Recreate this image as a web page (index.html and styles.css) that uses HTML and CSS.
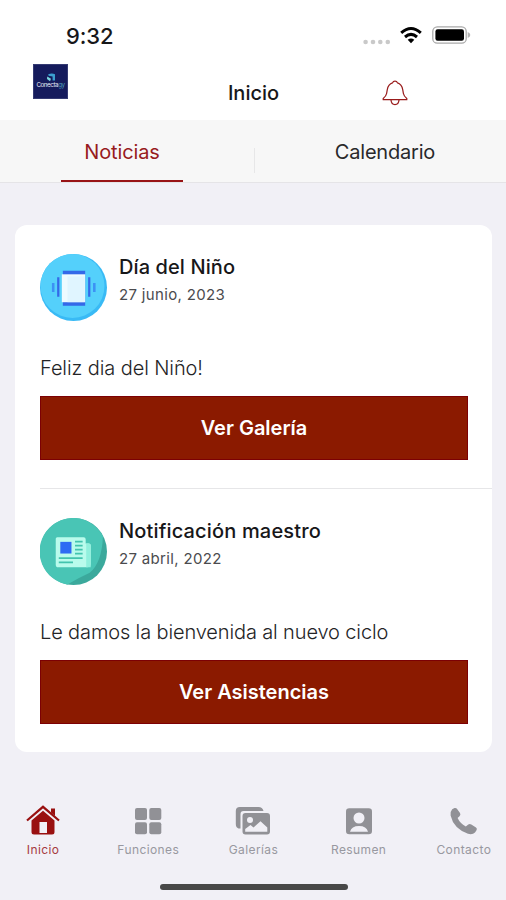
FILE: index.html
```html
<!DOCTYPE html>
<html lang="es">
<head>
<meta charset="utf-8">
<title>Inicio</title>
<link rel="stylesheet" href="styles.css">
</head>
<body>
<header class="top">
  <div class="status">
    <span class="time">9:32</span>
    <div class="signals">
      <svg class="dots" viewBox="0 0 28 6"><circle cx="2.6" cy="3" r="2.3"/><circle cx="10" cy="3" r="2.3"/><circle cx="17.3" cy="3" r="2.3"/><circle cx="24.8" cy="3" r="2.3"/></svg>
      <svg class="wifi" viewBox="0 0 24 18"><path d="M2.2 6.8Q12 -1.9 21.8 6.8M6 11Q12 5.8 18 11" fill="none" stroke="#000" stroke-width="3"/><path d="M8.7 13.8Q12 11.2 15.3 13.8L12 17.3z"/></svg>
      <svg class="battery" viewBox="0 0 39 18"><rect x=".8" y=".8" width="33.4" height="16.4" rx="4.5" fill="#fff" stroke="#a9a9a9" stroke-width="1.3"/><rect x="3.4" y="3.2" width="28.6" height="11.6" rx="2.2"/><path d="M35.7 6v6q2.6-1 2.6-3t-2.6-3z" fill="#b5b5b5"/></svg>
    </div>
  </div>
  <div class="bar">
    <div class="logo">
      <svg class="logo-mark" viewBox="0 0 10 9"><path d="M2.2 1.2Q6-.2 9 1.2V7.6H6.6V3.4L2.6 2.8z" fill="#3b9fd0"/><path d="M1.2 3.6L5 5.8 4 8.2 1 6z" fill="#79d5dc"/></svg>
      <span class="logo-name">Conecta<i>gy</i></span>
    </div>
    <h1>Inicio</h1>
    <svg class="bell" viewBox="0 0 26 26" fill="none" stroke="#991b1b" stroke-width="1.25" stroke-linejoin="round"><path d="M1.2 19.700H24.8V18.400Q22 16.500 21.400 13.500L20.7 9.500Q19.6 4.100 15.5 2.900Q14.8 1 13 1T10.5 2.900Q6.4 4.100 5.3 9.500L4.6 13.500Q4 16.500 1.2 18.400z"/><path d="M9 20Q9.4 24.600 13 24.600T17 20"/></svg>
  </div>
</header>
<nav class="tabs">
  <div class="tab on"><span>Noticias</span></div>
  <div class="tab cal"><span>Calendario</span></div>
</nav>
<main>
  <section class="card">
    <article class="post">
      <div class="head">
        <svg class="avatar" viewBox="0 0 66 66"><circle cx="33" cy="33" r="33" fill="#39baf5"/><circle cx="32" cy="31.500" r="31.500" fill="#54d0fb"/><path d="M22.500 16.500H44.500V51H22.500z" fill="#3469e8"/><rect x="21.500" y="20" width="23" height="27.500" fill="#edfaff"/><path d="M27 22H44V47.500H27z" fill="#d9f3ff" opacity=".65"/><path d="M18 23v19M48.500 23v19" stroke="#3469e8" stroke-width="2.200"/><path d="M13 28.500v9M53.500 28.500v9" stroke="#3c91f5" stroke-width="2.500"/></svg>
        <div><h2 class="t1">Día del Niño</h2><time class="d1">27 junio, 2023</time></div>
      </div>
      <p class="b1">Feliz dia del Niño!</p>
      <a class="btn">Ver Galería</a>
    </article>
    <article class="post">
      <div class="head">
        <svg class="avatar" viewBox="0 0 66 66"><circle cx="33" cy="33" r="33" fill="#3ba99c"/><path d="M62 18A33 33 0 1 0 27 65.500Q38 59 49 54Q61 44 62 18z" fill="#49c5b5"/><path d="M17 19H43Q45 19 45 21V25H48Q50 25 50 27V45Q50 48.500 46.500 48.500H18Q15.500 48.500 15.500 46V20.500Q15.500 19 17 19z" fill="#b9fbec"/><path d="M45.500 25V48.500H50V27Q50 25 48 25z" fill="#91f0dd"/><rect x="20" y="23.500" width="11" height="11.500" fill="#2d6bf3"/><path d="M34.500 23.200h7.500M34.500 27.200h7.500M34.500 31.200h7.500M34.500 35.200h7.500M18.500 39.500h23.500M18.500 43.700h14" stroke="#42c4ae" stroke-width="1.7"/></svg>
        <div><h2 class="t2">Notificación maestro</h2><time class="d2">27 abril, 2022</time></div>
      </div>
      <p class="b2">Le damos la bienvenida al nuevo ciclo</p>
      <a class="btn">Ver Asistencias</a>
    </article>
  </section>
</main>
<footer>
  <a class="item active"><svg viewBox="0 0 36 32"><path d="M2 16.500L18 2.800L34 16.500" fill="none" stroke="#991010" stroke-width="2.200"/><path d="M26 4.500H30V12L26 8.500z"/><path fill-rule="evenodd" d="M6.500 16.500L18 6.700L29.500 16.500V28Q29.500 30.500 27 30.500H9Q6.500 30.500 6.500 28zM14.500 18V29H22V18z"/></svg><span>Inicio</span></a>
  <a class="item"><svg viewBox="0 0 36 32"><rect x="5" y="4" width="12" height="12" rx="2"/><rect x="19.300" y="4" width="12" height="12" rx="2"/><rect x="5" y="18.300" width="12" height="12" rx="2"/><rect x="19.300" y="18.300" width="12" height="12" rx="2"/></svg><span>Funciones</span></a>
  <a class="item"><svg viewBox="0 0 36 32"><path d="M3.500 24.500Q.8 23.500.8 20V7Q.8 3 4.800 3H23.500Q27.500 3 28.500 7H8.500Q5.500 7 5.500 10V24.500z"/><path fill-rule="evenodd" d="M10.500 9H32Q35 9 35 12V27.500Q35 30.500 32 30.500H10.500Q7.500 30.500 7.500 27.500V12Q7.500 9 10.500 9zM10.200 27.800H32.300V23.500L25.500 17.200L18.500 23.500L15.500 21L10.200 25z"/><circle cx="15" cy="16" r="3" fill="#f1f0f6"/></svg><span>Galerías</span></a>
  <a class="item"><svg viewBox="0 0 36 32"><rect x="5" y="4.200" width="26" height="26" rx="3.300"/><circle cx="18" cy="14" r="5.500" fill="#f1f0f6"/><path d="M9 27.800Q10.500 22 18 22T27 27.800z" fill="#f1f0f6"/></svg><span>Resumen</span></a>
  <a class="item"><svg viewBox="0 0 36 32"><path d="M6.200 5.200L8.500 4Q10.200 3.500 11.300 5.200L14 9Q15 10.700 13.500 12.200L11.600 14Q14 19.300 19.800 22.500L22.300 20.400Q23.700 19.400 25.300 20.400L30 23.400Q31.500 24.700 30.500 26.200L29 28.500Q26.500 31 22 29.800Q7.500 24.500 4.600 11.500Q4 7.500 6.200 5.200z"/></svg><span>Contacto</span></a>
</footer>
<div class="home"></div>
</body>
</html>
```
FILE: styles.css
```css
* { box-sizing: border-box; margin: 0; padding: 0; }
body { width: 506px; height: 900px; overflow: hidden; background: #f1f0f6; color: #171719; font-family: Inter, "Liberation Sans", sans-serif; display: flex; flex-direction: column; }
svg { display: block; flex: none; }
span, h1, h2, p, time, .btn { white-space: nowrap; }

.top { height: 120px; background: #fff; }
.status { height: 60px; padding: 22px 35px 0 66px; display: flex; justify-content: space-between; }
.time { font-size: 22px; line-height: 29px; font-weight: 500; letter-spacing: -.1px; }
.signals { display: flex; padding-top: 4px; }
.dots { width: 28px; height: 6px; margin-top: 13px; fill: #c9c9c9; }
.wifi { width: 24px; height: 18px; margin-left: 8px; }
.battery { width: 39px; height: 18px; margin-left: 9px; }
.bar { height: 60px; padding: 4px 98px 0 33px; display: flex; justify-content: space-between; }
.logo { width: 35px; height: 35px; background: #151b5c; border: 1px solid #343a72; display: flex; flex-direction: column; align-items: center; padding-top: 8px; }
.logo-mark { width: 10px; height: 9px; }
.logo-name { font-size: 6.2px; line-height: 5px; letter-spacing: -.4px; color: #e8ecf7; }
.logo-name i { font-style: normal; color: #4fa3c0; }
h1 { font-size: 20px; line-height: 28px; font-weight: 500; margin: 15px 0 0 57px; }
.bell { width: 26px; height: 26px; margin-top: 16px; }

.tabs { height: 63px; background: #f7f7f7; border-bottom: 1px solid #e5e4e7; display: grid; grid-template-columns: 245px 1fr; column-gap: 18px; position: relative; }
.tabs::after { content: ""; position: absolute; left: 254px; top: 28px; width: 1px; height: 25px; background: #e7e7e8; }
.tab { display: flex; justify-content: center; font-size: 20px; line-height: 28px; padding-top: 18px; }
.tab.on { color: #981b1e; width: 122px; margin-left: 61px; height: 62px; border-bottom: 2px solid #981316; letter-spacing: -.15px; }
.tab.cal { letter-spacing: -.2px; padding-left: 1px; color: #29292b; }

main { padding: 42px 14px 0 15px; }
.card { height: 527px; background: #fff; border-radius: 12px; padding-left: 25px; }
.post { height: 263px; padding-top: 29px; }
.post + .post { height: 264px; border-top: 1px solid #e6e6e8; }
.head { display: flex; gap: 12px; height: 67px; }
.avatar { width: 67px; height: 67px; }
h2 { font-size: 20px; line-height: 28px; font-weight: 500; margin-top: -1px; }
.t1 { letter-spacing: .1px; }
.t2 { letter-spacing: .16px; }
time { display: block; font-size: 15px; line-height: 22px; color: #4b4b4e; margin-top: 3px; letter-spacing: .33px; }
p { font-size: 20px; line-height: 28px; margin-top: 33px; color: #242426; font-weight: 300; }
.b1 { letter-spacing: -.1px; }
.b2 { letter-spacing: -.13px; }
.btn { display: flex; align-items: center; justify-content: center; width: 428px; height: 64px; margin-top: 14px; background: #8b1a00; border: 1px solid #7c0004; color: #fff; font-size: 20px; font-weight: 600; }

footer { margin-top: 52px; height: 59px; display: flex; margin-left: -9.500px; width: 526px; }
.item { flex: 0 0 105.200px; display: flex; flex-direction: column; align-items: center; color: #9898a0; fill: #919196; font-size: 12px; line-height: 16px; }
.item svg { width: 36px; height: 32px; }
.item span { margin-top: 6px; letter-spacing: .4px; }
.item.active { color: #a63a3e; fill: #991010; }
.home { width: 188px; height: 6px; border-radius: 3px; background: #484848; margin: 21px 0 0 160px; }
```
